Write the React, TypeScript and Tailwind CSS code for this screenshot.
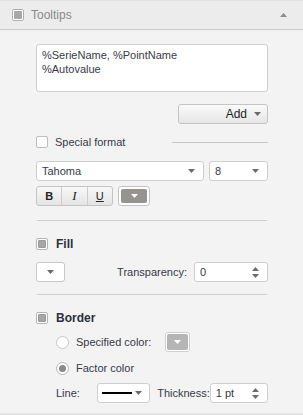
import React from 'react';

const font = { fontFamily: '"Liberation Sans", Arial, sans-serif' };

function Caret({ white = false }: { white?: boolean }) {
  return (
    <svg width="7" height="4" viewBox="0 0 7 4" className="shrink-0">
      <path d="M0 0h7L3.5 4z" fill={white ? '#ffffff' : '#6b6b6b'} />
    </svg>
  );
}

function Spin() {
  return (
    <svg width="7" height="11" viewBox="0 0 7 11" className="shrink-0">
      <path d="M0 4h7L3.5 0z" fill="#6b6b6b" />
      <path d="M0 7h7L3.5 11z" fill="#6b6b6b" />
    </svg>
  );
}

function FilledBox() {
  return (
    <span className="flex h-[12px] w-[12px] shrink-0 items-center justify-center rounded-[2px] border border-[#b4b4b4] bg-white">
      <span className="h-[8px] w-[8px] rounded-[1px] bg-[#a6a6a6] border border-[#9a9a9a]" />
    </span>
  );
}

function Separator() {
  return <div className="mx-[1px] h-px bg-[#d0d0d0]" />;
}

export default function App() {
  return (
    <div className="h-[415px] w-[303px] overflow-hidden bg-[#f3f3f3] text-[11px] text-[#363a4a]" style={font}>
      {/* header */}
      <div className="flex h-[30px] items-center border-t border-[#e2e2e2] border-b border-b-[#c9c9c9] bg-[#ececec] pl-[12px] pr-[16px]">
        <span className="flex h-[12px] w-[12px] items-center justify-center rounded-[2px] border border-[#b0b0b0] bg-white">
          <span className="h-[8px] w-[8px] rounded-[1px] bg-[#a8a8a8]" />
        </span>
        <span className="ml-[7px] text-[12px] text-[#8a8a8a]">Tooltips</span>
        <span className="ml-auto">
          <svg width="7" height="4" viewBox="0 0 7 4">
            <path d="M0 4h7L3.5 0z" fill="#8c8c8c" />
          </svg>
        </span>
      </div>

      <div className="flex flex-col pl-[36px] pr-[35px]">
        {/* textarea */}
        <div className="mt-[14px] h-[48px] rounded-[3px] border border-[#cfcfcf] bg-white px-[5px] pt-[3px] leading-[14px]">
          <div>%SerieName, %PointName</div>
          <div>%Autovalue</div>
        </div>

        {/* add */}
        <div className="mt-[12px] flex justify-end">
          <div className="flex h-[20px] w-[90px] items-center justify-end gap-[7px] rounded-[3px] border border-[#c4c4c4] bg-gradient-to-b from-[#fafafa] to-[#e6e6e6] pr-[6px]">
            <span className="text-[12px] text-[#222]">Add</span>
            <Caret />
          </div>
        </div>

        {/* special format */}
        <div className="mt-[12px] flex h-[12px] items-center">
          <span className="h-[12px] w-[12px] rounded-[2px] border border-[#bdbdbd] bg-white" />
          <span className="ml-[7px]">Special format</span>
          <span className="ml-auto h-px w-[96px] bg-[#c8c8c8]" />
        </div>

        {/* font row */}
        <div className="mt-[13px] flex h-[20px] gap-[5px]">
          <div className="flex flex-1 items-center justify-between rounded-[3px] border border-[#cfcfcf] bg-white pl-[5px] pr-[8px]">
            <span>Tahoma</span>
            <Caret />
          </div>
          <div className="flex w-[59px] items-center justify-between rounded-[3px] border border-[#cfcfcf] bg-white pl-[5px] pr-[8px]">
            <span>8</span>
            <Caret />
          </div>
        </div>

        {/* B I U */}
        <div className="mt-[5px] flex h-[20px] gap-[5px]">
          <div className="flex w-[77px] overflow-hidden rounded-[3px] border border-[#c4c4c4] bg-gradient-to-b from-[#f8f8f8] to-[#e4e4e4]">
            <span className="flex flex-1 items-center justify-center border-r border-[#cdcdcd] font-bold text-[#222]">B</span>
            <span className="flex flex-1 items-center justify-center border-r border-[#cdcdcd] italic text-[#222]" style={{ fontFamily: '"Liberation Serif", serif', fontSize: 13 }}>I</span>
            <span className="flex flex-1 items-center justify-center text-[#222] underline">U</span>
          </div>
          <div className="flex w-[32px] items-center justify-center rounded-[3px] border border-[#c4c4c4] bg-white p-[2px]">
            <div className="flex h-full w-full items-center justify-center rounded-[2px] bg-[#979391]">
              <Caret white />
            </div>
          </div>
        </div>

        <div className="mt-[14px]">
          <Separator />
        </div>

        {/* fill */}
        <div className="mt-[17px] flex h-[12px] items-center">
          <FilledBox />
          <span className="ml-[8px] text-[12px] font-bold text-[#2c2f3c]">Fill</span>
        </div>

        <div className="mt-[12px] flex h-[20px] items-center">
          <div className="flex h-[20px] w-[29px] items-center justify-center rounded-[3px] border border-[#c8c8c8] bg-white">
            <Caret />
          </div>
          <span className="ml-auto mr-[7px]">Transparency:</span>
          <div className="flex h-[20px] w-[74px] items-center justify-between rounded-[3px] border border-[#cfcfcf] bg-white pl-[5px] pr-[8px]">
            <span>0</span>
            <Spin />
          </div>
        </div>

        <div className="mt-[12px]">
          <Separator />
        </div>

        {/* border */}
        <div className="mt-[17px] flex h-[12px] items-center">
          <FilledBox />
          <span className="ml-[8px] text-[12px] font-bold text-[#2c2f3c]">Border</span>
        </div>

        <div className="mt-[8px] flex h-[20px] items-center pl-[20px]">
          <span className="h-[13px] w-[13px] rounded-full border border-[#c8c8c8] bg-white" />
          <span className="ml-[7px]">Specified color:</span>
          <div className="ml-[14px] flex h-[20px] w-[25px] items-center justify-center rounded-[3px] border border-[#cfcfcf] bg-white p-[1px]">
            <div className="flex h-full w-full items-center justify-center rounded-[2px] bg-[#b5b5b5]">
              <Caret white />
            </div>
          </div>
        </div>

        <div className="mt-[10px] flex h-[13px] items-center pl-[20px]">
          <span className="flex h-[13px] w-[13px] items-center justify-center rounded-full border border-[#b8b8b8] bg-white">
            <span className="h-[7px] w-[7px] rounded-full bg-[#8a8a8a]" />
          </span>
          <span className="ml-[7px]">Factor color</span>
        </div>

        <div className="mt-[8px] flex h-[20px] items-center pl-[20px]">
          <span>Line:</span>
          <div className="ml-[17px] flex h-[20px] w-[54px] items-center justify-between rounded-[3px] border border-[#cfcfcf] bg-white pl-[4px] pr-[7px]">
            <span className="h-[2px] w-[30px] bg-black" />
            <Caret />
          </div>
          <span className="ml-[7px]">Thickness:</span>
          <div className="ml-auto flex h-[20px] w-[59px] items-center justify-between rounded-[3px] border border-[#cfcfcf] bg-white pl-[5px] pr-[8px]">
            <span>1 pt</span>
            <Spin />
          </div>
        </div>
      </div>

      <div className="mt-[10px] h-[2px] bg-[#e2e2e2]" />
    </div>
  );
}
